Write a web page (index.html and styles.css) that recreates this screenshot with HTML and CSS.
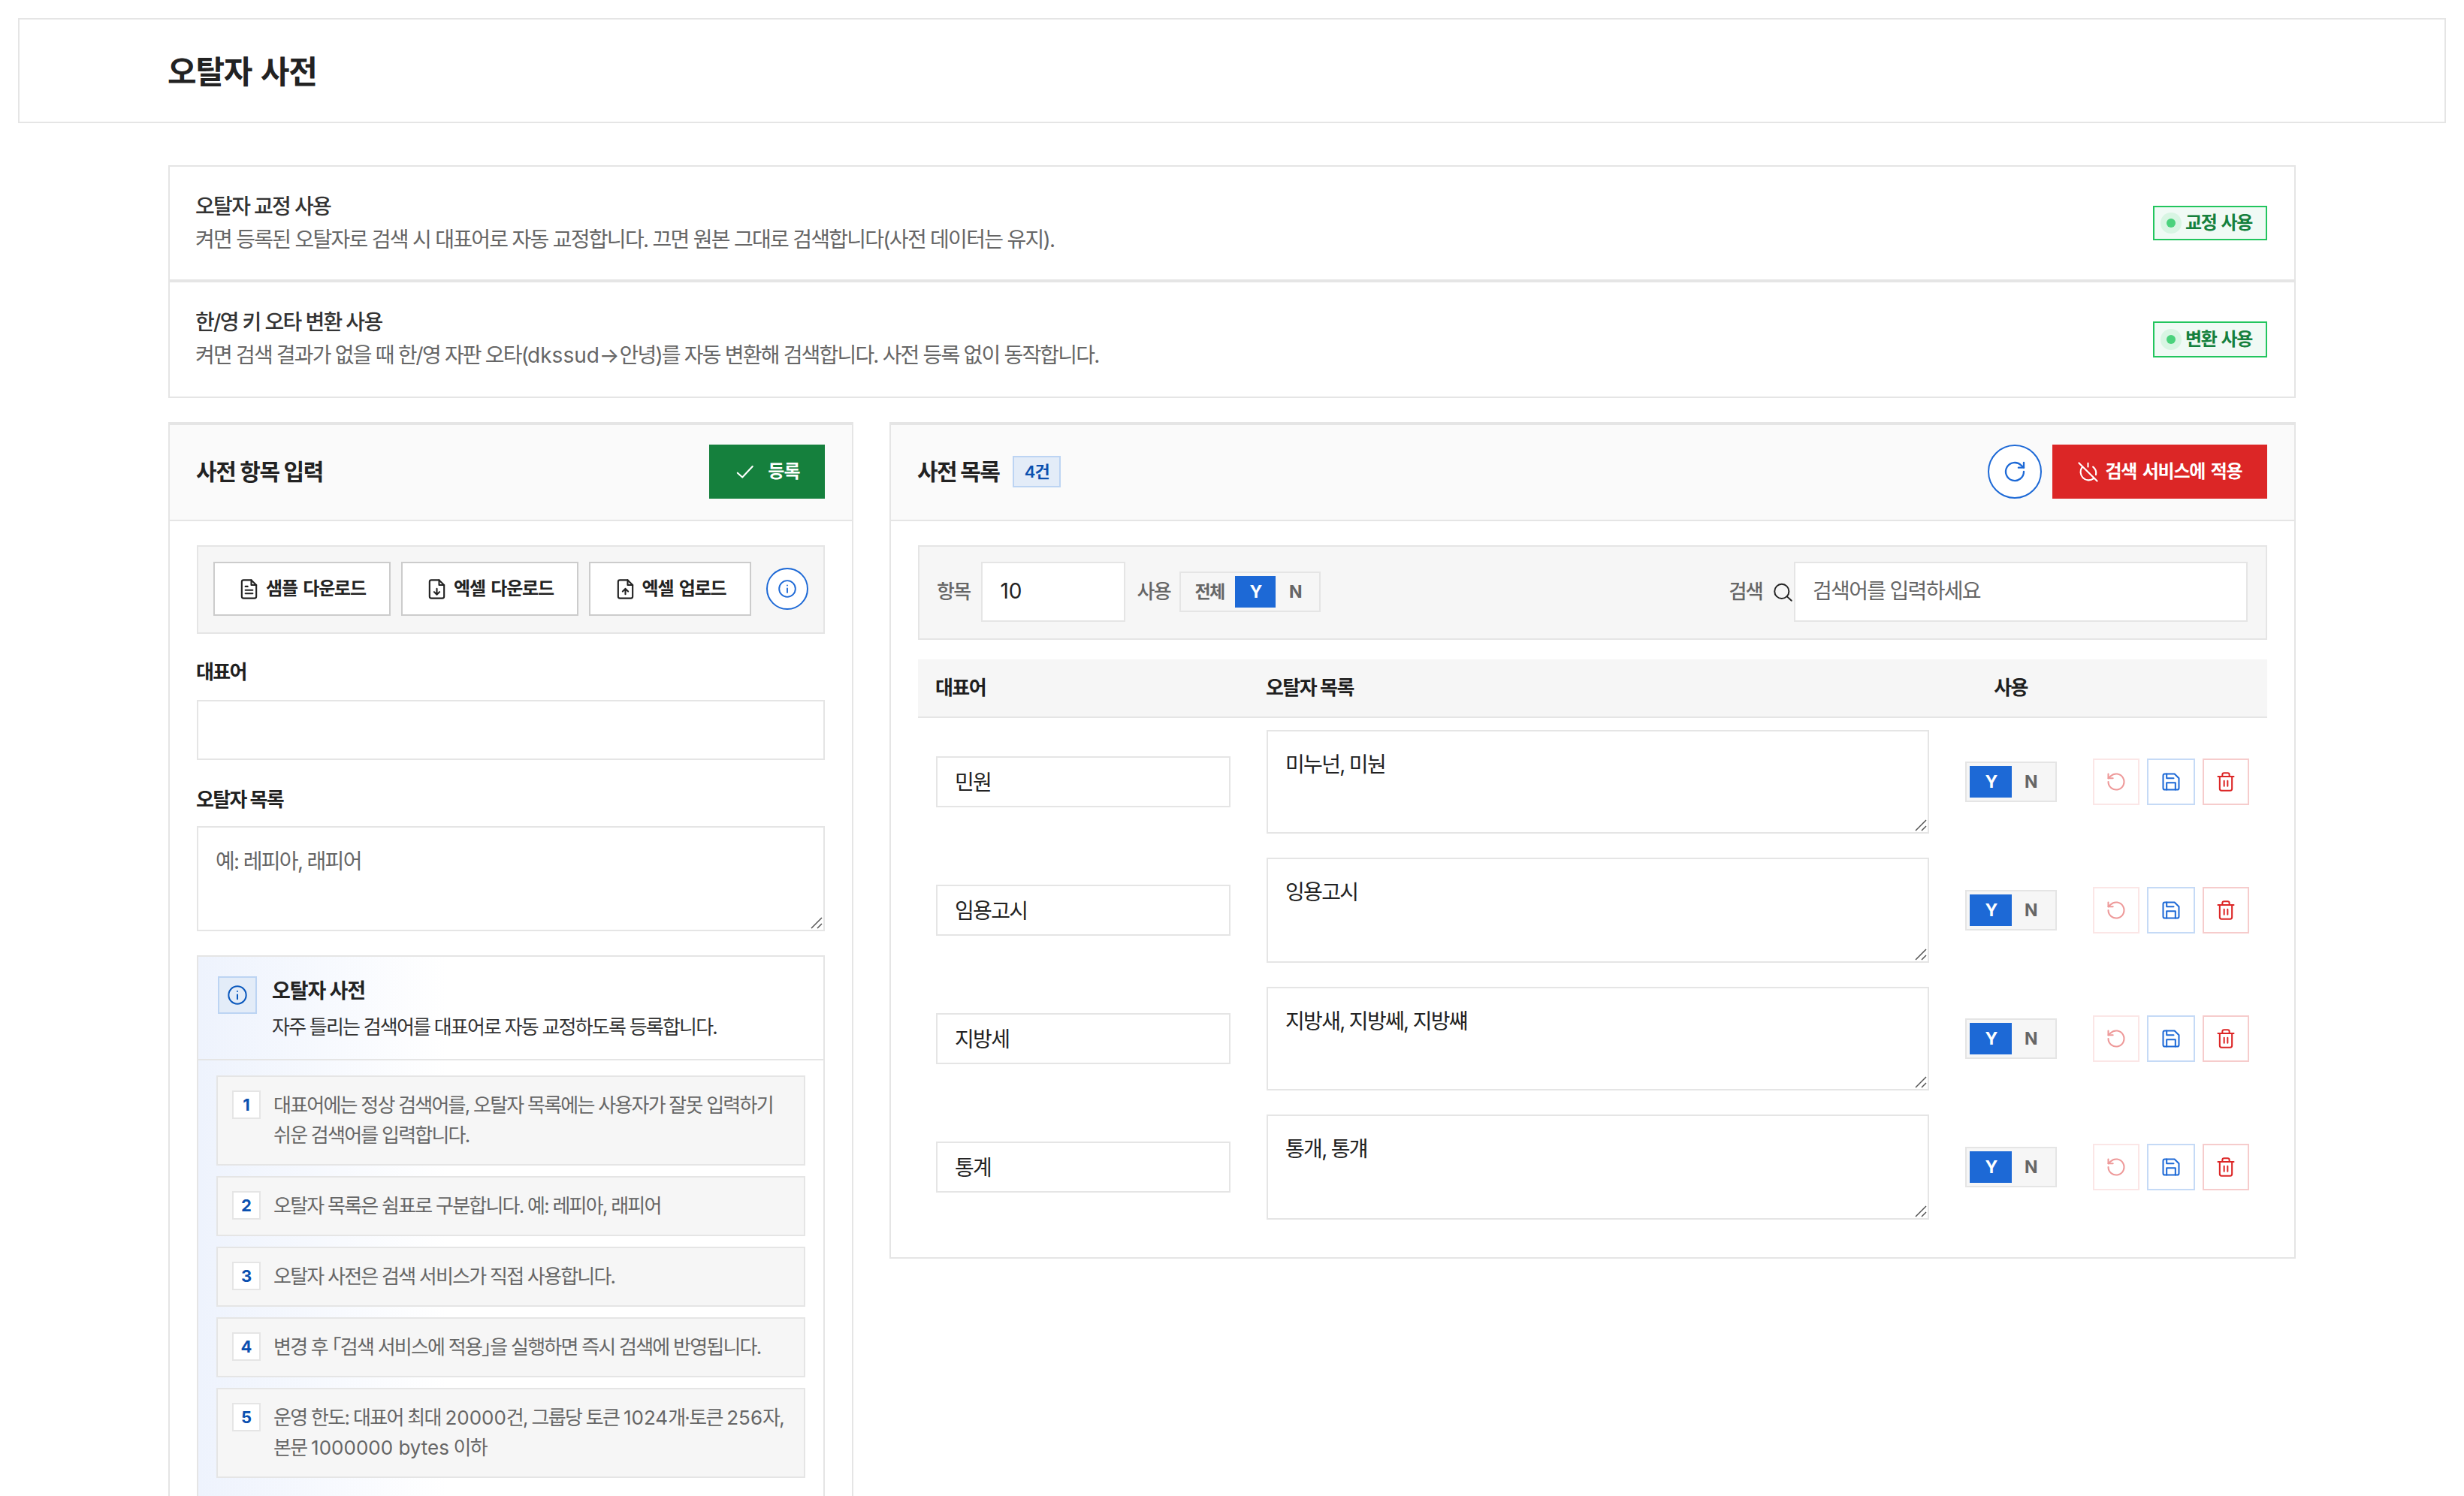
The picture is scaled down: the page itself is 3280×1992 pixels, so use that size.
FILE: index.html
```html
<!DOCTYPE html>
<html lang="ko">
<head>
<meta charset="utf-8">
<title>오탈자 사전</title>
<link rel="stylesheet" href="styles.css">
</head>
<body>
<svg class="defs" aria-hidden="true">
  <symbol id="i-check" viewBox="0 0 24 24"><path d="M4 13l5.300 4.800L20.500 5.800"/></symbol>
  <symbol id="i-file" viewBox="0 0 24 24"><path d="M14.500 2H6a2 2 0 0 0-2 2v16a2 2 0 0 0 2 2h12a2 2 0 0 0 2-2V7.500z"/><path d="M14.500 2v5.500H20M8 9h2.500M8 13h8M8 16.800h8"/></symbol>
  <symbol id="i-file-down" viewBox="0 0 24 24"><path d="M14.500 2H6a2 2 0 0 0-2 2v16a2 2 0 0 0 2 2h12a2 2 0 0 0 2-2V7.500z"/><path d="M14.500 2v5.500H20M12 11.500v6.300M9 15l3 3 3-3"/></symbol>
  <symbol id="i-file-up" viewBox="0 0 24 24"><path d="M14.500 2H6a2 2 0 0 0-2 2v16a2 2 0 0 0 2 2h12a2 2 0 0 0 2-2V7.500z"/><path d="M14.500 2v5.500H20M12 17.500v-6M9 14.500l3-3 3 3"/></symbol>
  <symbol id="i-info" viewBox="0 0 24 24"><circle cx="12" cy="12" r="10"/><path d="M12 11.500v5M12 7.700v.1"/></symbol>
  <symbol id="i-refresh" viewBox="0 0 24 24"><path d="M21 12a9 9 0 1 1-2.640-6.360L21 8"/><path d="M21 3v5h-5.300"/></symbol>
  <symbol id="i-undo" viewBox="0 0 24 24"><path d="M3 12a9 9 0 1 0 2.640-6.360L3 8"/><path d="M3 3v5h5.300"/></symbol>
  <symbol id="i-power-off" viewBox="0 0 24 24"><path d="M2 2l20 20M12 2.300v4M17.500 6.300a9 9 0 0 1 3.200 8.700M5.600 6.600a9 9 0 0 0 12.600 12.600"/></symbol>
  <symbol id="i-search" viewBox="0 0 24 24"><circle cx="10.500" cy="11" r="8.500"/><path d="M16.800 17.200L22 22"/></symbol>
  <symbol id="i-save" viewBox="0 0 24 24"><path d="M19 21H5a2 2 0 0 1-2-2V5a2 2 0 0 1 2-2h11l5 5v11a2 2 0 0 1-2 2z"/><path d="M17 21v-8H7v8M7 3v5h8"/></symbol>
  <symbol id="i-trash" viewBox="0 0 24 24"><path d="M3 6h18M5 6v14a2 2 0 0 0 2 2h10a2 2 0 0 0 2-2V6M8 6V4a2 2 0 0 1 2-2h4a2 2 0 0 1 2 2v2M10 11v6M14 11v6"/></symbol>
</svg>

<header class="page-header"><h1>오탈자 사전</h1></header>

<main class="page">
  <section class="setting">
    <div>
      <h2 class="setting-title">오탈자 교정 사용</h2>
      <p class="setting-desc">켜면 등록된 오탈자로 검색 시 대표어로 자동 교정합니다. 끄면 원본 그대로 검색합니다(사전 데이터는 유지).</p>
    </div>
    <span class="status"><i class="dot"></i>교정 사용</span>
  </section>
  <section class="setting setting-last">
    <div>
      <h2 class="setting-title">한/영 키 오타 변환 사용</h2>
      <p class="setting-desc">켜면 검색 결과가 없을 때 한/영 자판 오타(<span class="latin">dkssud→</span>안녕)를 자동 변환해 검색합니다. 사전 등록 없이 동작합니다.</p>
    </div>
    <span class="status"><i class="dot"></i>변환 사용</span>
  </section>

  <div class="columns">
    <section class="panel">
      <div class="panel-head">
        <h2 class="wide">사전 항목 입력</h2>
        <button class="btn btn-green"><svg class="icon"><use href="#i-check"/></svg>등록</button>
      </div>
      <div class="panel-body">
        <div class="tools">
          <button class="btn btn-line"><svg class="icon"><use href="#i-file"/></svg>샘플 다운로드</button>
          <button class="btn btn-line"><svg class="icon"><use href="#i-file-down"/></svg>엑셀 다운로드</button>
          <button class="btn btn-line btn-up"><svg class="icon"><use href="#i-file-up"/></svg>엑셀 업로드</button>
          <button class="round round-sm"><svg class="icon"><use href="#i-info"/></svg></button>
        </div>
        <label class="label">대표어</label>
        <input class="field" type="text">
        <label class="label label-list">오탈자 목록</label>
        <textarea class="field area" placeholder="예: 레피아, 래피어"></textarea>

        <div class="guide">
          <div class="guide-head">
            <span class="guide-icon"><svg class="icon"><use href="#i-info"/></svg></span>
            <div>
              <h3>오탈자 사전</h3>
              <p>자주 틀리는 검색어를 대표어로 자동 교정하도록 등록합니다.</p>
            </div>
          </div>
          <ol class="steps">
            <li><b>1</b><span>대표어에는 정상 검색어를, 오탈자 목록에는 사용자가 잘못 입력하기<br>쉬운 검색어를 입력합니다.</span></li>
            <li><b>2</b><span>오탈자 목록은 쉼표로 구분합니다. 예: 레피아, 래피어</span></li>
            <li><b>3</b><span>오탈자 사전은 검색 서비스가 직접 사용합니다.</span></li>
            <li><b>4</b><span class="brackets">변경 후 「검색 서비스에 적용」을 실행하면 즉시 검색에 반영됩니다.</span></li>
            <li><b>5</b><span class="limits">운영 한도: 대표어 최대 <span class="latin">20000</span>건, 그룹당 토큰 <span class="latin">1024</span>개·토큰 <span class="latin">256</span>자,<br>본문 <span class="latin">1000000 bytes</span> 이하</span></li>
          </ol>
        </div>
      </div>
    </section>

    <section class="panel">
      <div class="panel-head">
        <h2>사전 목록</h2><span class="count">4건</span>
        <button class="round push"><svg class="icon"><use href="#i-refresh"/></svg></button>
        <button class="btn btn-red"><svg class="icon"><use href="#i-power-off"/></svg>검색 서비스에 적용</button>
      </div>
      <div class="panel-body list-body">
        <div class="filters">
          <span class="flabel">항목</span>
          <input class="field num" type="text" value="10">
          <span class="flabel flabel-use">사용</span>
          <div class="seg"><span class="all">전체</span><span class="on">Y</span><span>N</span></div>
          <span class="flabel push">검색</span>
          <svg class="icon search-icon"><use href="#i-search"/></svg>
          <input class="field search" type="text" placeholder="검색어를 입력하세요">
        </div>
        <div class="thead"><span>대표어</span><span>오탈자 목록</span><span class="center">사용</span><span></span></div>
        <div class="trow">
          <input class="field cell" type="text" value="민원">
          <textarea class="field">미누넌, 미눤</textarea>
          <div class="seg seg-row"><span class="on">Y</span><span>N</span></div>
          <div class="acts"><button class="act undo"><svg class="icon"><use href="#i-undo"/></svg></button><button class="act save"><svg class="icon"><use href="#i-save"/></svg></button><button class="act del"><svg class="icon"><use href="#i-trash"/></svg></button></div>
        </div>
        <div class="trow">
          <input class="field cell" type="text" value="임용고시">
          <textarea class="field">잉용고시</textarea>
          <div class="seg seg-row"><span class="on">Y</span><span>N</span></div>
          <div class="acts"><button class="act undo"><svg class="icon"><use href="#i-undo"/></svg></button><button class="act save"><svg class="icon"><use href="#i-save"/></svg></button><button class="act del"><svg class="icon"><use href="#i-trash"/></svg></button></div>
        </div>
        <div class="trow">
          <input class="field cell" type="text" value="지방세">
          <textarea class="field">지방새, 지방쎄, 지방썌</textarea>
          <div class="seg seg-row"><span class="on">Y</span><span>N</span></div>
          <div class="acts"><button class="act undo"><svg class="icon"><use href="#i-undo"/></svg></button><button class="act save"><svg class="icon"><use href="#i-save"/></svg></button><button class="act del"><svg class="icon"><use href="#i-trash"/></svg></button></div>
        </div>
        <div class="trow">
          <input class="field cell" type="text" value="통계">
          <textarea class="field">통개, 통걔</textarea>
          <div class="seg seg-row"><span class="on">Y</span><span>N</span></div>
          <div class="acts"><button class="act undo"><svg class="icon"><use href="#i-undo"/></svg></button><button class="act save"><svg class="icon"><use href="#i-save"/></svg></button><button class="act del"><svg class="icon"><use href="#i-trash"/></svg></button></div>
        </div>
      </div>
    </section>
  </div>
</main>
</body>
</html>
```

FILE: styles.css
```css
* { box-sizing: border-box; margin: 0; padding: 0; }

html { overflow: hidden; height: 1992px; }

body {
  height: 1992px;
  overflow: hidden;
  padding: 24px;
  background: #fff;
  color: #1f1f1f;
  font: 400 28px/42px Inter, "Noto Sans CJK KR", sans-serif;
  letter-spacing: -0.06em;
}

button, input, textarea { font: inherit; letter-spacing: inherit; color: inherit; }

.defs { display: none; }

.icon {
  flex: none;
  width: 28px;
  height: 28px;
  fill: none;
  stroke: currentColor;
  stroke-width: 1.75;
  stroke-linecap: round;
  stroke-linejoin: round;
}

.latin { letter-spacing: 0; }

.page-header {
  display: flex;
  align-items: center;
  height: 140px;
  padding: 3px 0 0 197px;
  border: 2px solid #e5e5e5;
}
.page-header h1 { color: #222; font-size: 42px; font-weight: 700; line-height: 60px; letter-spacing: -0.03em; word-spacing: 3px; }

.page { padding: 56px 200px 0; }

.setting {
  display: flex;
  align-items: center;
  justify-content: space-between;
  height: 154px;
  padding: 0 36px 0 34px;
  border: 2px solid #e5e5e5;
}
.setting-last { height: 156px; padding-bottom: 2px; }
.setting-title { color: #333; font-size: 28px; font-weight: 500; line-height: 44px; }
.setting-desc { color: #666; line-height: 44px; letter-spacing: -0.0615em; }
.setting-last .setting-desc { letter-spacing: -0.065em; }
.setting-last .latin { letter-spacing: 0; }

.status {
  display: flex;
  align-items: center;
  gap: 13px;
  width: 152px;
  height: 46px;
  padding-left: 16px;
  border: 2px solid #22c55e;
  background: #f0faf5;
  color: #15803d;
  font-size: 24px;
  font-weight: 700;
  letter-spacing: -0.06em;
  word-spacing: 2px;
  white-space: nowrap;
}
.setting-last .status { height: 48px; margin-top: 2px; }
.dot { flex: none; width: 12px; height: 12px; border-radius: 50%; background: #4ad27c; box-shadow: 0 0 0 8px #d8f5e3; }

.columns {
  display: grid;
  grid-template-columns: 912px 1872px;
  align-items: start;
  gap: 48px;
  padding-top: 32px;
}

.panel { border: 2px solid #e5e5e5; }
.panel-head {
  display: flex;
  align-items: center;
  height: 130px;
  padding: 0 36px 2px 35px;
  border-top: 2px solid #e5e5e5;
  border-bottom: 2px solid #e5e5e5;
  background: #fafafa;
}
.panel-head h2 { color: #222; font-size: 30px; font-weight: 700; letter-spacing: -0.055em; }
.panel-head .wide { letter-spacing: -0.045em; }
.panel-body { padding: 32px 36px 0; }
.list-body { padding-bottom: 34px; }
.push { margin-left: auto; }

.btn {
  display: flex;
  align-items: center;
  justify-content: center;
  gap: 8px;
  height: 72px;
  border: 0;
  font-size: 24px;
  font-weight: 700;
  letter-spacing: -0.05em;
  word-spacing: 3px;
  white-space: nowrap;
}
.btn-green { gap: 16px; width: 154px; margin-left: auto; background: #15803d; color: #fff; letter-spacing: -0.03em; }
.btn-red { width: 286px; margin-left: 14px; background: #dc2626; color: #fff; }
.btn-line { width: 236px; border: 2px solid #ccc; background: #fff; color: #222; }
.btn-up { width: 216px; }
.btn .icon { width: 29px; height: 29px; }

.round {
  display: flex;
  align-items: center;
  justify-content: center;
  width: 72px;
  height: 72px;
  border: 2px solid #1d69d6;
  border-radius: 50%;
  background: #fff;
  color: #1d69d6;
}
.round .icon { width: 32px; height: 32px; }
.round-sm { width: 56px; height: 56px; margin-left: 6px; }
.round-sm .icon { width: 26px; height: 26px; }

.tools {
  display: flex;
  align-items: center;
  gap: 14px;
  height: 118px;
  padding: 0 20px 2px;
  border: 2px solid #e5e5e5;
  background: #f6f6f6;
}

.label { display: block; height: 50px; margin: 38px 0 0 -1px; font-size: 26px; font-weight: 600; line-height: 26px; }
.label-list { line-height: 29px; }
.field {
  display: block;
  width: 100%;
  height: 80px;
  padding: 0 24px 2px 23px;
  border: 2px solid #e5e5e5;
  background: #fff;
  color: #222;
  outline: 0;
}
.field::placeholder { color: #666; opacity: 1; }
textarea.field {
  padding: 23px;
  resize: none;
  background: #fff url("data:image/svg+xml,%3Csvg xmlns='http://www.w3.org/2000/svg' width='18' height='18'%3E%3Cpath d='M2 16L16 2M10 16l6-6' stroke='%23555' stroke-width='1.5'/%3E%3C/svg%3E") no-repeat right bottom;
}
textarea.area { height: 140px; padding-top: 24px; }

.guide {
  height: 760px;
  margin-top: 32px;
  border: 2px solid #e5e5e5;
  background: linear-gradient(90deg, #eef3fd 0, #fff 40%);
}
.guide-head { display: flex; gap: 20px; height: 138px; padding: 26px 26px 0; border-bottom: 2px solid #e5e5e5; }
.guide-icon {
  display: flex;
  align-items: center;
  justify-content: center;
  width: 52px;
  height: 50px;
  border: 2px solid #bcd4f3;
  background: #e3ecf8;
  color: #0a58bd;
}
.guide-head h3 { color: #222; font-size: 27px; font-weight: 700; line-height: 40px; letter-spacing: -0.04em; }
.guide-head p { margin-top: 8px; color: #333; font-size: 26px; line-height: 40px; letter-spacing: -0.069em; }

.steps { display: grid; gap: 14px; padding: 20px 24px; list-style: none; }
.steps li {
  display: flex;
  gap: 16px;
  height: 80px;
  padding: 18px 0 18px 20px;
  border: 2px solid #e5e5e5;
  background: #f6f6f6;
  color: #666;
  font-size: 26px;
  line-height: 40px;
  letter-spacing: -0.068em;
  white-space: nowrap;
}
.steps li:first-child, .steps li:last-child { height: 120px; }
.steps .limits { letter-spacing: -0.065em; }
.brackets { font-feature-settings: "halt"; }
.steps b {
  flex: none;
  width: 38px;
  height: 38px;
  margin-left: -1px;
  margin-right: 1px;
  border: 2px solid #e5e5e5;
  background: #fff;
  color: #0a50b0;
  font-size: 22px;
  line-height: 34px;
  text-align: center;
  letter-spacing: 0;
}

.count {
  display: flex;
  align-items: center;
  justify-content: center;
  width: 64px;
  height: 42px;
  margin-left: 18px;
  border: 2px solid #bcd4f3;
  background: #e3ecf8;
  color: #0a50b0;
  font-size: 22px;
  font-weight: 600;
  letter-spacing: -0.04em;
}

.filters {
  display: flex;
  align-items: center;
  height: 126px;
  padding: 0 24px 2px 23px;
  border: 2px solid #e5e5e5;
  background: #f6f6f6;
}
.flabel { padding-bottom: 1px; color: #666; font-size: 26px; font-weight: 500; }
.num { width: 192px; margin-left: 15px; letter-spacing: 0; }
.flabel-use { margin: 0 12px 0 15px; }
.search-icon { width: 27px; height: 27px; margin: 0 1px 0 14px; color: #222; }
.search { width: 604px; }

.seg {
  display: flex;
  width: 188px;
  height: 54px;
  padding: 4px;
  border: 2px solid #e5e5e5;
  background: #f6f6f6;
  color: #666;
  font-size: 23px;
  font-weight: 700;
  line-height: 42px;
  text-align: center;
}
.seg span { width: 52px; }
.seg .all { width: 68px; font-weight: 600; }
.seg .on { width: 54px; background: #1d69d6; color: #fff; }
.seg-row { width: 122px; }
.seg-row span { width: 50px; }
.seg-row .on { width: 56px; }

.thead, .trow {
  display: grid;
  grid-template-columns: 392px 882px 122px 208px;
  column-gap: 48px;
  align-items: center;
  padding: 0 24px;
}
.thead {
  height: 78px;
  margin-top: 26px;
  border-bottom: 2px solid #e5e5e5;
  background: #f6f6f6;
  font-size: 26px;
  font-weight: 600;
  text-indent: -1px;
  letter-spacing: -0.06em;
}
.center { text-align: center; }
.trow { height: 170px; }
.trow:nth-child(even) { height: 172px; }
.trow textarea { height: 138px; }
.trow:nth-child(even) textarea { height: 140px; }
.trow .cell { height: 68px; }

.acts { display: flex; gap: 10px; }
.act {
  display: flex;
  align-items: center;
  justify-content: center;
  width: 62px;
  height: 62px;
  border: 2px solid;
  background: #fff;
}
.undo { border-color: #fbe6e6; color: #ee9999; }
.save { width: 64px; border-color: #c5daf6; color: #1d69d6; }
.del { border-color: #f6cccc; color: #dc2626; }
```
